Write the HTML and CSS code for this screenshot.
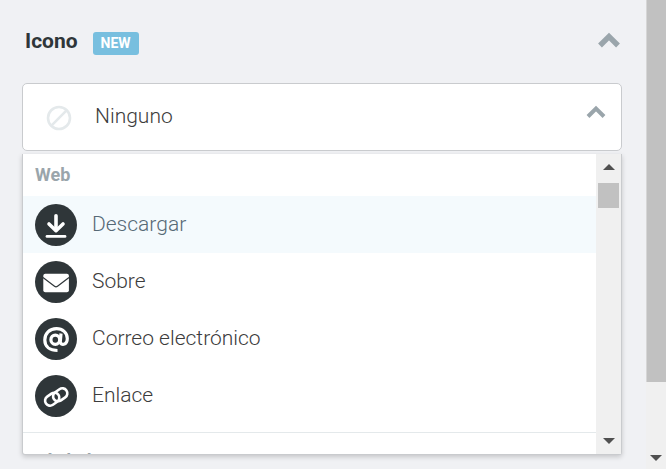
FILE: index.html
```html
<!DOCTYPE html>
<html lang="es">
<head>
    <meta charset="UTF-8">
    <meta name="viewport" content="width=device-width, initial-scale=1.0">
    <title>Icono</title>
    <link rel="stylesheet" href="styles.css">
</head>
<body>

    <main class="panel">
      <header class="panel-header">
        <h2 class="panel-title">Icono</h2>
        <span class="badge">NEW</span>
        <button class="panel-toggle" type="button" aria-label="Contraer">
          <svg width="22" height="16" viewBox="0 0 22 16"><path d="M2 13.5 11 4.5 20 13.5" fill="none" stroke="#9aa5ab" stroke-width="5.4"/></svg>
        </button>
      </header>

      <button class="select-box" type="button" aria-expanded="true" aria-controls="icon-list">
        <svg class="none-icon" width="26" height="26" viewBox="0 0 26 26"><g fill="none" stroke="#e4e9eb" stroke-width="2.6"><circle cx="13" cy="13" r="11"/><path d="M5.2 20.8 20.8 5.2"/></g></svg>
        <span class="select-value">Ninguno</span>
        <svg class="select-arrow" width="20" height="14" viewBox="0 0 20 14"><path d="M2 11.5 10 3.5 18 11.5" fill="none" stroke="#9aa5ab" stroke-width="4"/></svg>
      </button>

      <div class="dropdown">
        <div class="dropdown-content" id="icon-list">
          <h3 class="group-title">Web</h3>
          <button class="option is-active" type="button">
            <svg class="option-icon" viewBox="0 0 42 42"><circle cx="21" cy="21" r="21" fill="#2f3639"/><g fill="none" stroke="#fff" stroke-width="3.6" stroke-linecap="round" stroke-linejoin="round"><path d="M21 11.7V26"/><path d="M14 20 21 26.7 28 20"/><path d="M12 32.4H30" stroke-width="2.8"/></g></svg>
            <span class="option-name">Descargar</span>
          </button>
          <button class="option" type="button">
            <svg class="option-icon" viewBox="0 0 42 42"><circle cx="21" cy="21" r="21" fill="#2f3639"/><rect x="8.3" y="12.8" width="25.6" height="18.4" rx="2" fill="#fff"/><path d="M8 16.5 19.5 25.3Q21 26.5 22.5 25.3L34 16.5" fill="none" stroke="#2f3639" stroke-width="1.2"/></svg>
            <span class="option-name">Sobre</span>
          </button>
          <button class="option" type="button">
            <svg class="option-icon" viewBox="0 0 42 42"><circle cx="21" cy="21" r="21" fill="#2f3639"/><g fill="none" stroke="#fff" stroke-width="3.2"><ellipse cx="20.3" cy="21.7" rx="4.4" ry="4.6"/><path d="M26 15.5 25.3 23.5C25.2 27.8 32.3 27.5 32.3 20.5C32.3 14.5 27.5 10.7 21.5 10.7C14.5 10.7 9.8 15.7 9.8 22C9.8 28.8 15 32.5 22.5 32.5"/></g></svg>
            <span class="option-name">Correo electrónico</span>
          </button>
          <button class="option" type="button">
            <svg class="option-icon" viewBox="0 0 42 42"><circle cx="21" cy="21" r="21" fill="#2f3639"/><g fill="none" stroke="#fff" stroke-width="2.6"><rect x="-7.6" y="-5" width="15.2" height="10" rx="5" transform="translate(17.2 24.2) rotate(-35)"/><rect x="-7.6" y="-5" width="15.2" height="10" rx="5" transform="translate(25.2 19.8) rotate(-35)"/></g></svg>
            <span class="option-name">Enlace</span>
          </button>
          <h3 class="group-title group-title-next">Símbolos</h3>
        </div>
        <div class="scrollbar">
          <span class="arrow arrow-up"></span>
          <span class="thumb"></span>
          <span class="arrow arrow-down"></span>
        </div>
      </div>
    </main>

    <div class="page-scrollbar">
      <span class="page-thumb"></span>
      <span class="arrow arrow-down"></span>
    </div>

</body>
</html>
```
FILE: styles.css
```css
* {
  box-sizing: border-box;
}

body {
  display: flex;
  height: 100vh;
  margin: 0;
  overflow: hidden;
  font: 300 21px/24px Roboto, sans-serif;
  color: #3c3c3c;
  background: #f0f1f4;
}

button {
  padding: 0;
  border: 0;
  font: inherit;
  color: inherit;
  text-align: left;
  background: none;
  cursor: pointer;
}

svg {
  display: block;
  flex-shrink: 0;
}

.panel {
  display: flex;
  flex: 1;
  flex-direction: column;
  padding: 0 24px 14px 22px;
}

.panel-header {
  display: flex;
  align-items: center;
  height: 83px;
  padding: 0 2px 3px 3px;
}

.panel-title {
  margin: 0 15px 0 0;
  padding-top: 2px;
  font-size: 21px;
  font-weight: 700;
  color: #2f3639;
}

.badge {
  margin-top: 7px;
  padding: 0 8px;
  border-radius: 3px;
  font-size: 14px;
  font-weight: 700;
  line-height: 23px;
  color: #fff;
  background: #78bfdf;
}

.panel-toggle {
  margin-left: auto;
}

.select-box {
  display: flex;
  flex-shrink: 0;
  align-items: center;
  height: 68px;
  padding: 2px 15px 0 23px;
  border: 1px solid #c9cbce;
  border-radius: 5px;
  background: #fff;
}

.none-icon {
  margin-right: 23px;
}

.select-value {
  flex: 1;
  padding-bottom: 4px;
}

.select-arrow {
  margin-bottom: 12px;
}

.dropdown {
  display: flex;
  flex: 1;
  min-height: 0;
  margin-top: 3px;
  border: 1px solid #c9cbce;
  border-top: 0;
  border-radius: 0 0 3px 3px;
  background: #fff;
  box-shadow: 0 2px 5px rgba(0, 0, 0, 0.18);
}

.dropdown-content {
  flex: 1;
  overflow: hidden;
}

.group-title {
  margin: 0;
  padding: 9px 12px;
  font-size: 18px;
  font-weight: 700;
  color: #9aa5ab;
}

.group-title-next {
  margin-top: 8px;
  border-top: 1px solid #e4e9eb;
  padding-top: 16px;
}

.option {
  display: flex;
  align-items: center;
  width: 100%;
  height: 57px;
  padding: 0 12px;
}

.option.is-active {
  color: #566976;
  background: #f4fafd;
}

.option-icon {
  width: 42px;
  height: 42px;
  margin-right: 15px;
}

.option-name {
  padding-bottom: 2px;
}

.scrollbar,
.page-scrollbar {
  display: flex;
  flex-direction: column;
  align-items: center;
  background: #f0f0f0;
}

.scrollbar {
  width: 25px;
  padding: 10px 0;
}

.thumb {
  width: 21px;
  height: 25px;
  margin-top: 13px;
  background: #c1c1c1;
}

.arrow {
  border: 6px solid transparent;
}

.arrow-up {
  border-top: 0;
  border-bottom-color: #505050;
}

.arrow-down {
  margin-top: auto;
  border-bottom: 0;
  border-top-color: #505050;
}

.page-scrollbar {
  width: 20px;
  padding-bottom: 8px;
}

.page-thumb {
  width: 100%;
  height: 382px;
  border-left: 1px solid #d6d6d6;
  background: #c1c1c1;
}
```
